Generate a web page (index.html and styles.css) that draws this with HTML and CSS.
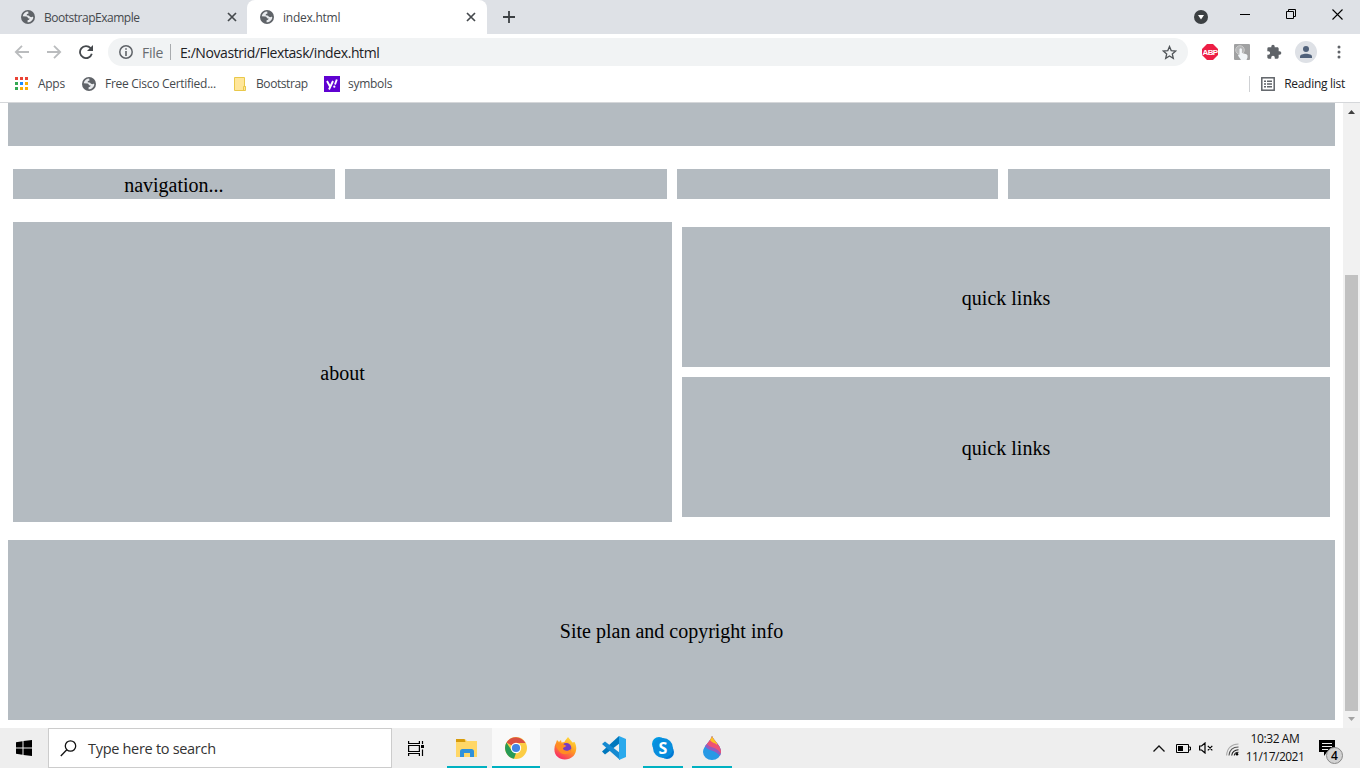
FILE: index.html
```html
<!DOCTYPE html>
<html lang="en">
<head>
<meta charset="utf-8">
<title>index.html</title>
<link rel="stylesheet" href="styles.css">
</head>
<body>
<svg class="defs" width="0" height="0">
  <symbol id="globe" viewBox="0 0 14 14"><circle cx="7" cy="7" r="7" fill="#5f6368"/><path d="M7.2 1.6C4.6 1.7 2.3 3.300 1.700 6.200L5.200 6.400C6.700 6.600 6.800 7.500 7 8.300L8.600 8.400C8.500 9.700 7.500 9.800 6.700 10.100L6.500 12.300C9.500 12.400 12.200 10 12.300 7.200C11.300 6.300 10.800 7.300 9.800 7.100C8.500 6.900 8.500 5.700 7.300 5.500L5.700 5.300C5.600 4 6.400 3.700 7.500 3.600Z" fill="#e8eaed"/></symbol>
  <symbol id="close" viewBox="0 0 10 10"><path d="M1 1l8 8M9 1l-8 8" stroke="#45494d" stroke-width="1.7"/></symbol>
</svg>
<div class="screen">
  <header class="tabs">
    <div class="tab tab-idle"><svg class="globe"><use href="#globe"/></svg><span class="tab-title idle-title">BootstrapExample</span><svg class="close"><use href="#close"/></svg></div>
    <div class="tab tab-active"><svg class="globe"><use href="#globe"/></svg><span class="tab-title">index.html</span><svg class="close"><use href="#close"/></svg></div>
    <svg class="plus" viewBox="0 0 12 12"><path d="M6 0v12M0 6h12" stroke="#3c4043" stroke-width="1.800"/></svg>
    <div class="window-controls">
      <svg width="14" height="14" viewBox="0 0 14 14"><circle cx="7" cy="7" r="7" fill="#3c4043"/><path d="M4 5h6L7 9.500z" fill="#fff"/></svg>
      <svg class="min" width="10" height="10"><path d="M0 4.500h10" stroke="#000"/></svg>
      <svg class="restore" width="11" height="11" fill="none" stroke="#000"><path d="M.5 2.500h7v7h-7zM2.500 2.500v-2h7v7h-2"/></svg>
      <svg class="exit" width="11" height="11"><path d="M.5.5l10 10M10.500.5l-10 10" stroke="#000" stroke-width="1.100"/></svg>
    </div>
  </header>

  <nav class="toolbar">
    <svg class="back" width="16" height="14" fill="none" stroke="#babcbe" stroke-width="1.800"><path d="M15 7H2M8 .8L1.800 7 8 13.200"/></svg>
    <svg class="forward" width="16" height="14" fill="none" stroke="#babcbe" stroke-width="1.800"><path d="M0 7h13M7 .8L13.200 7 7 13.200"/></svg>
    <svg class="reload" width="14" height="14" viewBox="0 0 14 14"><path d="M11.600 3.200A6 6 0 1 0 12.800 8.700" fill="none" stroke="#45494d" stroke-width="1.800"/><path d="M14 0v6H8z" fill="#45494d"/></svg>
    <div class="address">
      <svg class="info" width="14" height="14"><circle cx="7" cy="7" r="6.200" fill="none" stroke="#5f6368" stroke-width="1.500"/><path d="M7 6v5M7 3.200v1.600" stroke="#5f6368" stroke-width="1.600"/></svg>
      <span class="file">File</span><span class="divider"></span><span class="url">E:/Novastrid/Flextask/index.html</span>
      <svg class="star" width="15" height="15" viewBox="0 0 15 15"><path d="M7.500 1.500l1.700 4.100 4.500.4-3.400 2.900 1 4.400-3.800-2.300-3.800 2.300 1-4.400L1.300 6l4.500-.4z" fill="none" stroke="#505458" stroke-width="1.300"/></svg>
    </div>
    <div class="abp"><svg class="abp-shape" viewBox="0 0 16 16"><path d="M5 0h6l5 5v6l-5 5H5l-5-5V5z" fill="#ed1e45"/></svg><span class="abp-text">ABP</span></div>
    <svg class="touch" width="16" height="16"><rect width="16" height="16" rx="1" fill="#a0a1a2"/><circle cx="6" cy="6" r="4.300" fill="#b5b6b7" stroke="#ccc"/><path d="M5.500 5q1.200-1.400 2.400 0v4l4.600 1.300q1.500.7 1 3.200L12.500 16H7L4 11.500l.8-1 .7.500z" fill="#f2f6f9"/></svg>
    <svg class="puzzle" width="16" height="16" viewBox="0 0 24 24"><path fill="#5f6368" d="M20.500 11H19V7c0-1.100-.9-2-2-2h-4V3.500a2.500 2.500 0 0 0-5 0V5H4a2 2 0 0 0-2 2v3.800h1.500a2.700 2.700 0 0 1 0 5.400H2V20c0 1.100.9 2 2 2h3.800v-1.500a2.700 2.700 0 0 1 5.400 0V22H17a2 2 0 0 0 2-2v-4h1.500a2.500 2.500 0 0 0 0-5z"/></svg>
    <svg class="person" width="22" height="22"><circle cx="11" cy="11" r="11" fill="#dee1e6"/><circle cx="11" cy="8" r="3" fill="#50617a"/><path d="M5 17v-1.500C5 11.800 17 11.800 17 15.500V17z" fill="#50617a"/></svg>
    <svg class="dots" width="4" height="14" fill="#5f6368"><circle cx="2" cy="2" r="1.500"/><circle cx="2" cy="7" r="1.500"/><circle cx="2" cy="12" r="1.500"/></svg>
  </nav>

  <nav class="bookmarks">
    <svg class="apps" width="13" height="13"><path fill="#ea4335" d="M0 0h3v3H0zM5 0h3v3H5zM10 0h3v3h-3z"/><path fill="#34a853" d="M0 5h3v3H0zM0 10h3v3H0z"/><path fill="#1a8cff" d="M5 5h3v3H5z"/><path fill="#fbae04" d="M10 5h3v3h-3zM5 10h3v3H5zM10 10h3v3h-3z"/></svg>
    <span class="bm bm-apps">Apps</span>
    <svg class="globe bm-globe"><use href="#globe"/></svg>
    <span class="bm bm-cisco">Free Cisco Certified...</span>
    <svg class="folder" width="12" height="14"><path d="M.5.5h10v9h1v4H.5z" fill="#ffe69a" stroke="#e9c84b"/><path d="M9.500 13v-3.500h2" fill="none" stroke="#e9c84b"/></svg>
    <span class="bm bm-boot">Bootstrap</span>
    <svg class="yahoo" width="16" height="16"><rect width="16" height="16" fill="#5f01d1"/><path d="M3 5l3 5.500M9 5l-4 8.500M11 8.500l1.800-5" fill="none" stroke="#fff" stroke-width="1.900"/><circle cx="10.300" cy="10.700" r="1.100" fill="#fff"/></svg>
    <span class="bm bm-symbols">symbols</span>
    <div class="reading">
      <svg class="list" width="14" height="14"><rect x=".8" y=".8" width="12.400" height="12.400" fill="none" stroke="#5f6368" stroke-width="1.500"/><path d="M3 4.200h2M6 4.200h5M3 7h2M6 7h5M3 9.800h2M6 9.800h5" stroke="#5f6368" stroke-width="1.400"/></svg>
      <span class="bm dark">Reading list</span>
    </div>
  </nav>

  <div class="viewport">
    <main class="page">
      <div class="box banner"></div>
      <div class="nav-grid"><div class="box">navigation...</div><div class="box"></div><div class="box"></div><div class="box"></div></div>
      <div class="content">
        <div class="box about">about</div>
        <div class="links"><div class="box">quick links</div><div class="box">quick links</div></div>
      </div>
      <footer class="box footer">Site plan and copyright info</footer>
    </main>
    <div class="scrollbar">
      <svg width="7" height="4"><path d="M0 4L3.500 0 7 4z" fill="#404040"/></svg>
      <div class="thumb"></div>
      <svg width="7" height="4"><path d="M0 0h7L3.500 4z" fill="#a3a3a3"/></svg>
    </div>
  </div>

  <footer class="taskbar">
    <div class="start"><svg width="16" height="16"><path d="M0 2.200L6.500 1.300V7.500H0zM7.500 1.100L16 0v7.500H7.500zM0 8.500h6.500v6.200L0 13.800zM7.500 8.500H16V16l-8.500-1.100z"/></svg></div>
    <div class="search"><svg width="17" height="17" fill="none" stroke="#111" stroke-width="1.300"><circle cx="10.500" cy="6" r="5.200"/><path d="M6.800 9.800L.8 16"/></svg><span class="search-text">Type here to search</span></div>
    <div class="app taskview"><svg width="17" height="15" fill="none" stroke="#000" stroke-width="1.200"><path d="M.6 0v2.500h10.800V0M.6 15v-2.500h10.800V15M.6 4.500h10.800v6H.6zM14.500 0v3M14.500 8.500V15"/><path d="M13 4h3v3h-3z" fill="#000" stroke="none"/></svg></div>
    <div class="app running explorer"><svg width="22" height="19"><path d="M0 0h9l2 2h10v16H0z" fill="#ffd767"/><path d="M0 0h8.500l1 3H0z" fill="#d79b0b"/><path d="M4 18v-5.500Q4 10 6.500 10h9q2.500 0 2.500 2.500V18h-4v-4H8v4z" fill="#2f91db"/></svg></div>
    <div class="app running chrome"><svg width="22" height="22" viewBox="0 0 22 22"><circle cx="11" cy="11" r="11" fill="#fccd45"/><path d="M11 11L1.500 5.500A11 11 0 0 1 20.500 6H11z" fill="#d94f42"/><path d="M1.500 5.500L6.700 13.500 11 16l-2 5.800A11 11 0 0 1 1.500 5.500z" fill="#289b57"/><circle cx="11" cy="11" r="5.200" fill="#fff"/><circle cx="11" cy="11" r="4.100" fill="#4285e5"/></svg></div>
    <div class="app firefox"><svg width="23" height="23" viewBox="0 0 23 23"><defs><linearGradient id="ff" x1=".8" y1="0" x2=".2" y2="1"><stop stop-color="#ffe33d"/><stop offset=".45" stop-color="#ff9b22"/><stop offset="1" stop-color="#f8206e"/></linearGradient></defs><path d="M2 6L3 3l2 2 2-2 .5 2.500 3-.5C11 3 13 2 14 0l4.500 5.500 2-.5C23 9 23 15 19.500 19 12 26 0 22 .4 12Q.5 8.500 2 6z" fill="url(#ff)"/><circle cx="12.300" cy="11" r="5" fill="#743bc4"/><path d="M2 6.500C5 6 7 6 9 7l3.500 2L9 11c0 3 5 4 8 1C17 18 8 19 5 14 3 11 1 9 2 6.500z" fill="#ff8d23"/></svg></div>
    <div class="app vscode"><svg width="24" height="24"><path d="M17 0L0 15.500 3 18.500 18 7z" fill="#0078bd"/><path d="M0 8l3-2.500L18 17v7z" fill="#158ad1"/><path d="M17 0l7 3v18l-7 3z" fill="#2aa9ec"/></svg></div>
    <div class="app running skype"><svg class="skype-shape" width="22" height="22"><circle cx="7" cy="7" r="7" fill="#0098e3"/><circle cx="15" cy="15" r="7" fill="#0079d4"/><circle cx="11" cy="11" r="10" fill="#078ddd"/></svg><span class="skype-letter">S</span></div>
    <div class="app running drop"><svg width="18" height="24" viewBox="0 0 18 24"><defs><clipPath id="d"><path d="M9 0C10 4 18 9 18 16A9 8 0 0 1 0 16C0 10 8 5 9 0z"/></clipPath></defs><g clip-path="url(#d)"><path d="M0 0h18v24H0z" fill="#2799e5"/><path d="M0 8C6 17 11 12 18 21V0H0z" fill="#955bbe"/><path d="M3 7c4 6 11 3 15 11V0H3z" fill="#ed5275"/><path d="M7 4c3 4 5 2 7 5V0H7z" fill="#fbc522"/></g></svg></div>
    <div class="tray">
      <svg width="12" height="7"><path d="M.5 6.500L6 1l5.500 5.500" fill="none" stroke="#111" stroke-width="1.300"/></svg>
      <svg class="battery" width="15" height="9"><path d="M.5.5h12v8H.5zM13 3h1.500v3H13" fill="none" stroke="#000"/><path d="M2 2h5v5H2z"/></svg>
      <svg class="sound" width="15" height="12" fill="none" stroke="#000" stroke-width="1.200"><path d="M.6 4h2L6 1v10L2.600 8h-2zM8.800 3.800l4.500 4.500M13.300 3.800l-4.500 4.500"/></svg>
      <svg class="wifi" width="13" height="13" fill="none" stroke-width="1.100"><path d="M.6 12.500C1 5 6 1 12.500 1" stroke="#aaa"/><path d="M3 12.500C3.500 7 7 4 12.500 4" stroke="#555"/><path d="M5.700 12.500Q6.500 7 12.500 6.800M8.300 12.500Q8.500 9.500 12.500 9.300" stroke="#222"/><circle cx="11" cy="11.300" r="1.300" fill="#000"/></svg>
      <div class="clock"><span class="time">10:32 AM</span><span class="date">11/17/2021</span></div>
      <div class="notifications"><svg width="16" height="16"><path d="M0 0h16v12H8l-3 4v-4H0z"/><path d="M3 3.500h10M3 6.500h10M3 9.500h6" stroke="#eee"/></svg><span class="badge">4</span></div>
    </div>
  </footer>
</div>
</body>
</html>
```
FILE: styles.css
```css
* { box-sizing: border-box; }
body { margin: 0; background: #fff; font-family: "Open Sans", "Noto Sans", sans-serif; }
svg { display: block; flex: none; }
span { white-space: nowrap; }
.defs { position: absolute; }
.screen { width: 1360px; height: 768px; display: flex; flex-direction: column; overflow: hidden; }

.tabs { height: 34px; background: #dee1e6; display: flex; align-items: center; }
.tab { height: 34px; display: flex; align-items: center; }
.tab-idle { width: 247px; padding: 0 10px 0 21px; }
.tab-active { width: 240px; padding: 0 11px 0 13px; background: #fff; border-radius: 8px 8px 0 0; }
.globe { width: 14px; height: 14px; }
.tab-title { margin-left: 9px; font-size: 12px; letter-spacing: -0.25px; color: #45494d; }
.idle-title { letter-spacing: -0.48px; }
.close { width: 10px; height: 10px; margin-left: auto; }
.plus { width: 12px; height: 12px; margin-left: 16px; }
.window-controls { margin-left: auto; padding-right: 17px; display: flex; align-items: center; }
.min { margin: -5px 0 0 32px; }
.restore { margin: -5px 0 0 36px; }
.exit { margin: -5px 0 0 35px; }

.toolbar { height: 36px; display: flex; align-items: center; padding-left: 14px; }
.forward { margin-left: 17px; }
.reload { margin-left: 16px; }
.address { width: 1080px; height: 28px; margin-left: 15px; padding: 0 11px; border-radius: 14px; background: #f1f3f4; display: flex; align-items: center; font-size: 14px; }
.file { width: 28px; margin-left: 9px; color: #686c70; letter-spacing: -0.3px; }
.divider { width: 1px; height: 16px; background: #a8abae; }
.url { margin-left: 9px; color: #202124; letter-spacing: -0.41px; }
.star { margin-left: auto; }
.abp { position: relative; width: 16px; height: 16px; margin-left: 14px; display: flex; align-items: center; justify-content: center; }
.abp-shape { position: absolute; inset: 0; width: 16px; height: 16px; }
.abp-text { position: relative; color: #fff; font: bold 8px/9px "Liberation Sans", sans-serif; letter-spacing: -0.6px; }
.touch { margin-left: 16px; }
.puzzle { margin-left: 16px; }
.person { margin-left: 13px; }
.dots { margin-left: 20px; }

.bookmarks { height: 33px; padding: 0 15px 5px 15px; border-bottom: 1px solid #d5d7da; display: flex; align-items: center; }
.bm { font-size: 12px; color: #45494d; letter-spacing: -0.28px; }
.bm-apps { width: 44px; margin-left: 10px; }
.bm-cisco { width: 129px; margin-left: 9px; }
.bm-boot { width: 68px; margin-left: 10px; letter-spacing: -0.42px; }
.bm-symbols { margin-left: 8px; }
.bm-globe { flex: none; }
.reading { height: 16px; margin-left: auto; border-left: 1px solid #cfd1d4; padding-left: 11px; display: flex; align-items: center; gap: 9px; }
.dark { color: #202124; }

.viewport { height: 625px; display: flex; }
.page { width: 1343px; padding: 0 8px; font: 20px "Liberation Serif", serif; color: #000; }
.box { background: #b4bbc1; display: flex; align-items: center; justify-content: center; padding-top: 2px; }
.banner { height: 43px; }
.nav-grid { padding: 0 5px; margin-top: 23px; display: grid; grid-template-columns: repeat(4, 1fr); grid-template-rows: 30px; gap: 10px; }
.content { height: 300px; margin-top: 23px; padding: 0 5px; display: flex; gap: 10px; }
.about { width: 659px; }
.links { flex: 1; padding: 5px 0; display: flex; flex-direction: column; gap: 10px; }
.links .box { flex: 1; }
.footer { height: 180px; margin-top: 18px; }
.scrollbar { width: 17px; background: #f1f1f1; padding: 7px 0; display: flex; flex-direction: column; align-items: center; justify-content: space-between; }
.thumb { width: 13px; height: 436px; margin-top: 155px; background: #c1c1c1; }

.taskbar { height: 40px; background: #eee; display: flex; }
.start { width: 48px; display: flex; align-items: center; justify-content: center; }
.search { width: 344px; border: 1px solid #ccc; background: #fff; display: flex; align-items: center; padding-left: 11px; gap: 11px; }
.search-text { color: #333; font-size: 14.5px; letter-spacing: -0.3px; }
.app { position: relative; height: 40px; width: 40px; display: flex; align-items: center; justify-content: center; }
.running { border-bottom: 2px solid #00b1c1; padding-top: 2px; }
.taskview { width: 48px; }
.explorer { margin-left: 7px; }
.chrome { width: 48px; margin-left: 5px; background: #f9f9f9; }
.firefox { margin-left: 5px; }
.vscode { margin-left: 9px; }
.skype { margin-left: 9px; }
.skype-letter { position: absolute; color: #fff; font: bold 16px/20px "Open Sans", sans-serif; }
.drop { margin-left: 9px; }
.tray { margin-left: auto; display: flex; align-items: center; width: 207px; }
.battery { margin-left: 11px; }
.sound { margin-left: 8px; }
.wifi { margin: 3px 0 0 12px; }
.clock { width: 70px; margin-left: 1px; display: flex; flex-direction: column; align-items: center; font-size: 12px; line-height: 18px; color: #111; }
.time { letter-spacing: -0.4px; }
.date { letter-spacing: -0.52px; }
.notifications { position: relative; margin-left: 9px; }
.badge { position: absolute; left: 7px; top: 7px; width: 17px; height: 17px; border: 1px solid #888; border-radius: 50%; background: #d2d2d2; color: #000; text-align: center; font-size: 12px; font-weight: 600; line-height: 15px; }
```
